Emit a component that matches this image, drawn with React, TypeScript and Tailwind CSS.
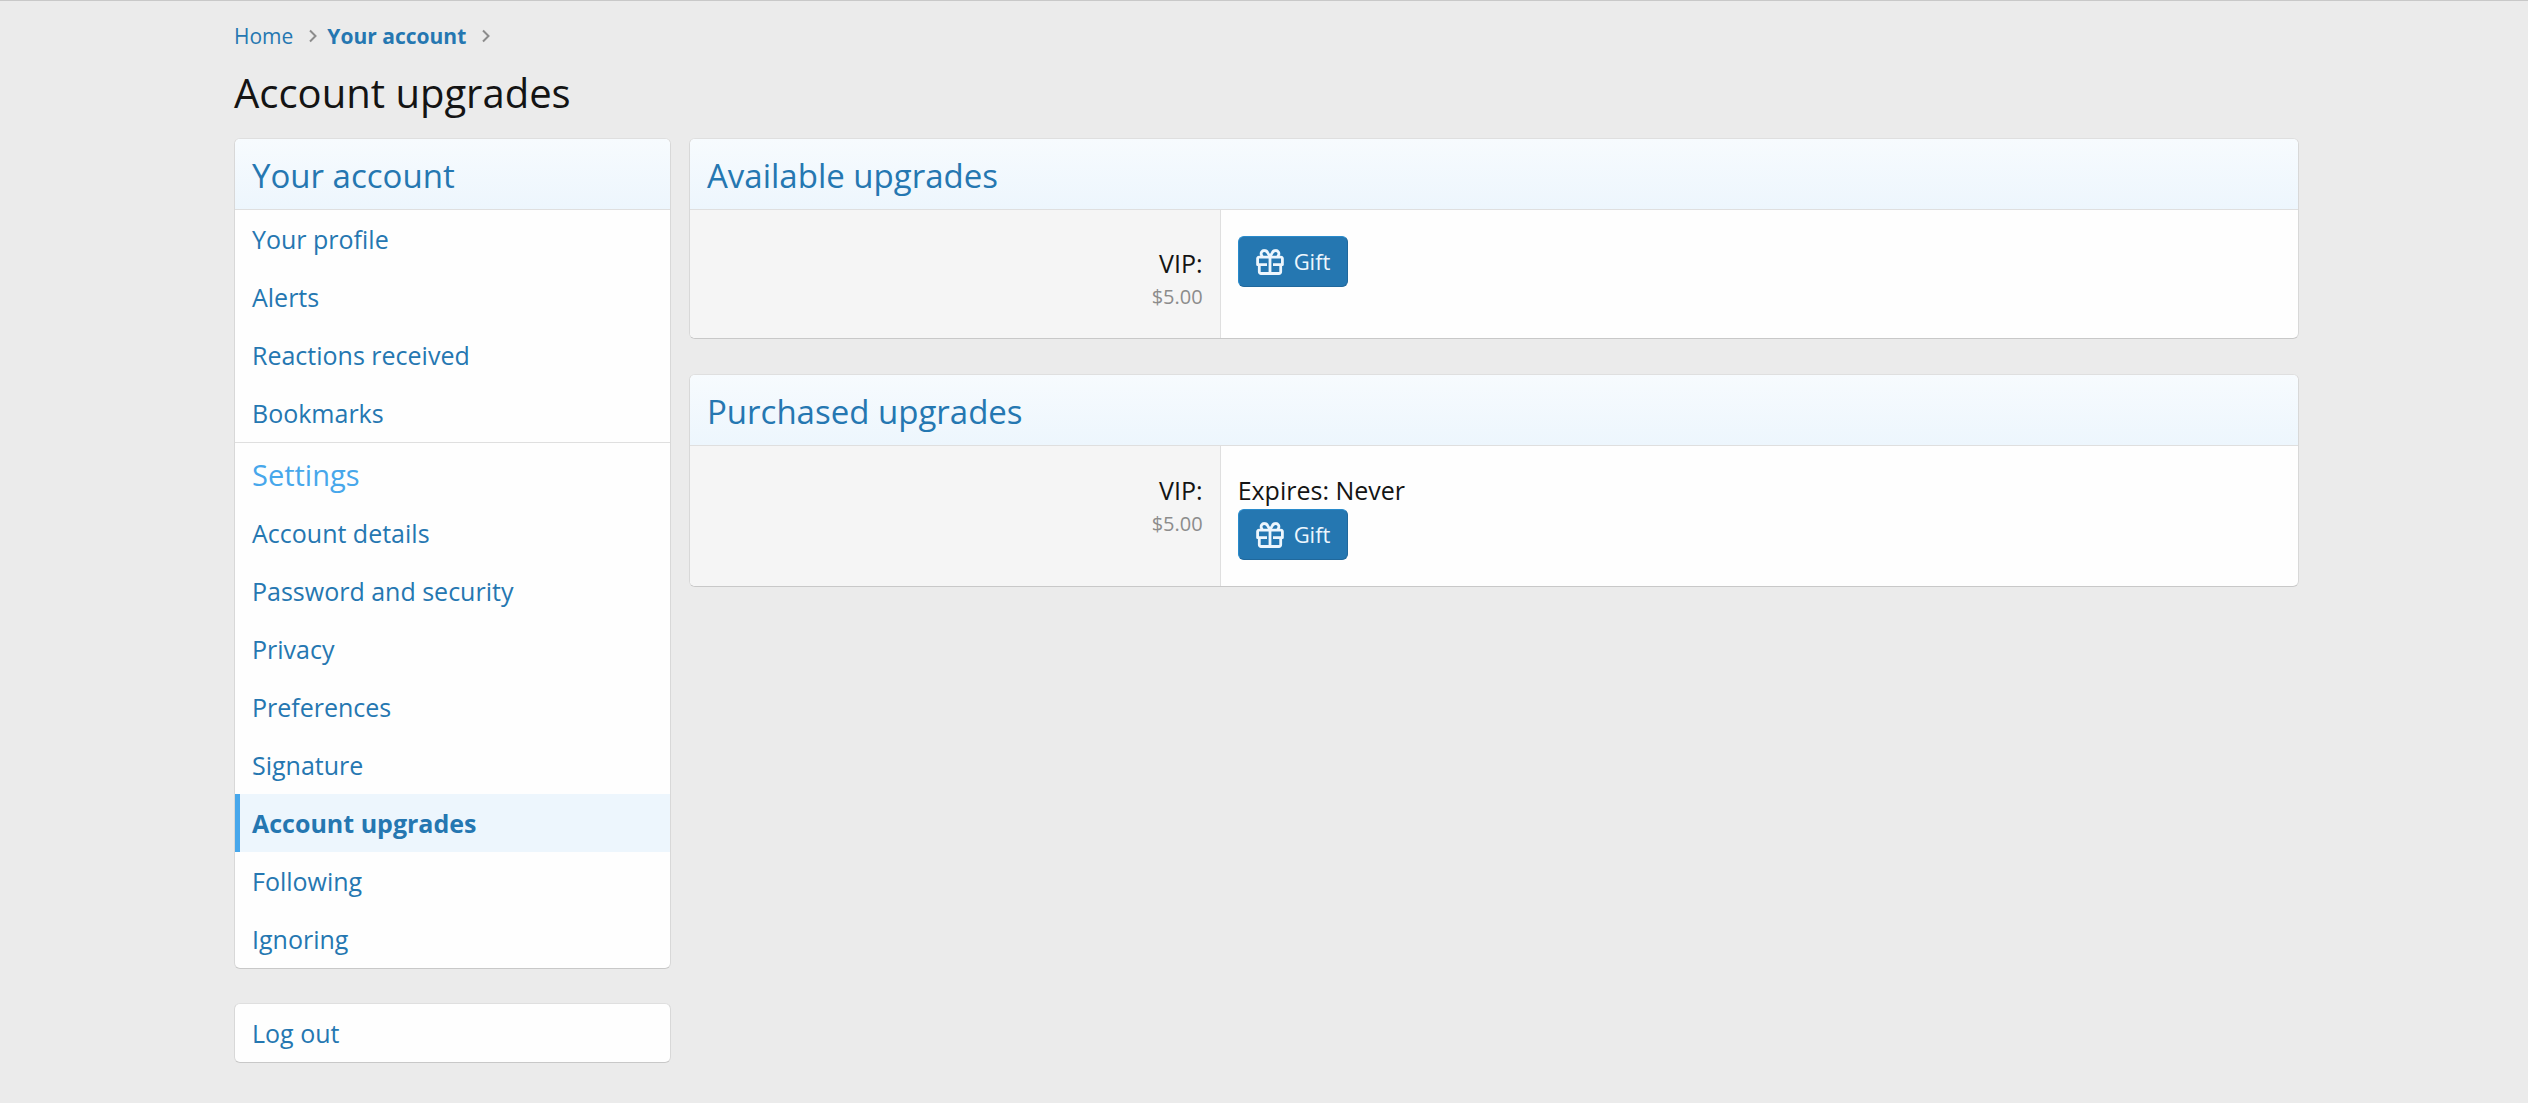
import type { ReactNode } from "react";

const settingsLinks = [
  "Account details",
  "Password and security",
  "Privacy",
  "Preferences",
  "Signature",
  "Account upgrades",
  "Following",
  "Ignoring",
];

const accountLinks = ["Your profile", "Alerts", "Reactions received", "Bookmarks"];

const blockClass =
  "overflow-hidden rounded-md border border-t-[#dfdfdf] border-r-[#d8d8d8] border-b-[#c8c8c8] border-l-[#d8d8d8] bg-[#fefefe]";

function Chevron() {
  return (
    <svg className="h-3.5 w-2" viewBox="0 0 8 14" fill="none" stroke="#8c8c8c" strokeWidth="2" aria-hidden="true">
      <path d="M1 1.5 6.5 7 1 12.5" />
    </svg>
  );
}

function GiftIcon() {
  return (
    <svg
      className="h-[26px] w-7"
      viewBox="0 0 28 26"
      fill="none"
      stroke="currentColor"
      strokeWidth="2.8"
      strokeLinejoin="round"
      aria-hidden="true"
    >
      <path d="M11 15.700H1.600V9.600a1.500 1.500 0 0 1 1.500-1.500h21.800a1.500 1.500 0 0 1 1.500 1.500v6.100H17" />
      <path d="M3.300 15.700v7.100a1.700 1.700 0 0 0 1.700 1.700h18a1.700 1.700 0 0 0 1.700-1.700v-7.100M14 8v16.500" />
      <path d="M14 7.800 11.800 3.800C11 2.200 9.800 1.500 8.400 1.500A3.200 3.200 0 0 0 5.500 6.200L6.300 7.800M14 7.800l2.200-4C17 2.200 18.200 1.500 19.600 1.500a3.200 3.200 0 0 1 2.900 4.700L21.700 7.800" />
    </svg>
  );
}

function GiftButton() {
  return (
    <button
      type="button"
      className="flex h-[51px] w-[110px] items-center gap-[10px] rounded-md border border-t-[#298bcc] border-r-[#20689c] border-b-[#20689c] border-l-[#298bcc] bg-[#2577b1] pl-[17px] text-[22px] text-[#edf6fd]"
    >
      <GiftIcon />
      Gift
    </button>
  );
}

function BlockHeader({ children }: { children: ReactNode }) {
  return (
    <h2 className="border-b border-[#dfdfdf] bg-linear-to-b from-[#f7fbfe] to-[#edf6fd] px-[17px] pt-[15px] pb-[11px] text-[33px] leading-[44px] text-[#2577b1]">
      {children}
    </h2>
  );
}

function NavLink({ label, active = false }: { label: string; active?: boolean }) {
  return (
    <li>
      <a
        href="#"
        aria-current={active ? "page" : undefined}
        className={
          active
            ? "block border-l-5 border-[#47a7eb] bg-[#edf6fd] py-3 pl-3 text-[25px] leading-[34px] font-bold text-[#2577b1]"
            : "block px-[17px] py-3 text-[25px] leading-[34px] text-[#2577b1]"
        }
      >
        {label}
      </a>
    </li>
  );
}

type UpgradeRowProps = { name: string; price: string; expires?: string };

function UpgradeRow({ name, price, expires }: UpgradeRowProps) {
  return (
    <dl className="flex text-[25px] leading-[37px] text-[#141414]">
      <dt
        className={`w-[33%] border-r border-[#dfdfdf] bg-[#f5f5f5] px-[17px] pb-[26px] text-right ${
          expires ? "pt-[26px]" : "pt-[35px]"
        }`}
      >
        {name}:
        <div className="text-[20px] leading-[30px] text-[#8c8c8c]">{price}</div>
      </dt>
      <dd className="flex-1 px-[17px] py-[26px]">
        {expires && <div>Expires: {expires}</div>}
        <GiftButton />
      </dd>
    </dl>
  );
}

export default function App() {
  return (
    <div className="min-h-screen border-t border-[#c8c8c8] bg-[#ebebeb] pr-[229px] pb-10 pl-[234px] font-['Open_Sans','Noto_Sans',sans-serif]">
      <nav aria-label="Breadcrumb" className="pt-[19px]">
        <ol className="flex items-center text-[21px] leading-[32px] text-[#2577b1]">
          <li>
            <a href="#">Home</a>
          </li>
          <li className="flex items-center gap-2.5 pl-4">
            <Chevron />
            <a href="#" className="font-bold">
              Your account
            </a>
          </li>
          <li className="pl-4">
            <Chevron />
          </li>
        </ol>
      </nav>
      <h1 className="pt-3 pb-[17px] text-[40px] leading-[57px] text-[#141414]">Account upgrades</h1>

      <div className="flex items-start gap-[18px]">
        <aside className="flex w-[437px] shrink-0 flex-col gap-[34px]">
          <nav aria-label="Your account" className={blockClass}>
            <BlockHeader>Your account</BlockHeader>
            <ul>
              {accountLinks.map((label) => (
                <NavLink key={label} label={label} />
              ))}
            </ul>
            <h3 className="border-t border-[#dfdfdf] px-[17px] pt-[13px] pb-[11px] text-[29px] leading-[37px] text-[#47a7eb]">
              Settings
            </h3>
            <ul>
              {settingsLinks.map((label) => (
                <NavLink key={label} label={label} active={label === "Account upgrades"} />
              ))}
            </ul>
          </nav>
          <ul className={blockClass}>
            <NavLink label="Log out" />
          </ul>
        </aside>

        <main className="flex min-w-0 flex-1 flex-col gap-[35px]">
          <section className={blockClass}>
            <BlockHeader>Available upgrades</BlockHeader>
            <UpgradeRow name="VIP" price="$5.00" />
          </section>
          <section className={blockClass}>
            <BlockHeader>Purchased upgrades</BlockHeader>
            <UpgradeRow name="VIP" price="$5.00" expires="Never" />
          </section>
        </main>
      </div>
    </div>
  );
}
